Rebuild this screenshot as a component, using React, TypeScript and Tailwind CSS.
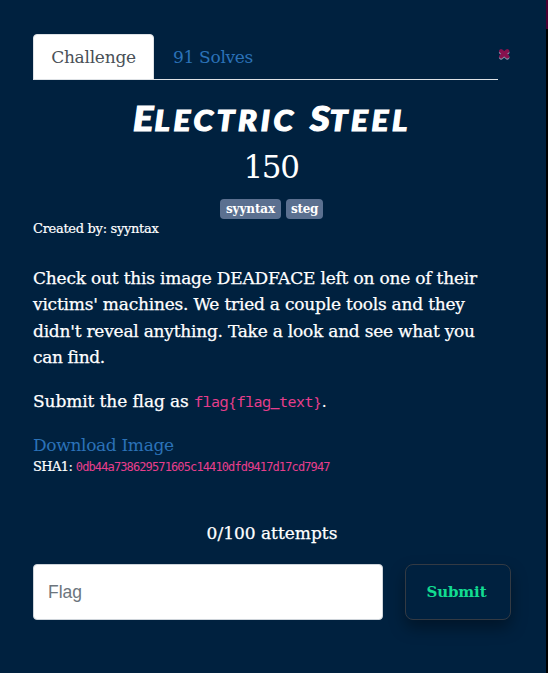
import type { ReactNode } from 'react';

const slab = "font-['DejaVu_Serif',serif]";

function Line({ children, spacing }: { children: ReactNode; spacing: string }) {
  return <span className={`block whitespace-nowrap ${spacing}`}>{children}</span>;
}

function Badge({ children, size }: { children: string; size: string }) {
  return (
    <span className={`flex h-5 items-center justify-center rounded bg-[#5b7090] pb-px text-[12px] font-bold ${size}`}>
      {children}
    </span>
  );
}

function CloseIcon() {
  return (
    <svg width="14" height="14" viewBox="0 0 14 14" className="block" fill="none" strokeLinecap="round">
      <path d="M3 5.4 9.4 10.6M9.4 5.4 3 10.6" stroke="#8090a8" strokeWidth="4" />
      <path d="M3.1 4.1 9.3 9.5M9.3 4.1 3.1 9.5" stroke="#86114e" strokeWidth="4" />
    </svg>
  );
}

export default function App() {
  return (
    <div className={`flex h-[673px] w-[548px] overflow-hidden bg-black text-white ${slab}`}>
      <main className="flex w-[546px] flex-col bg-[#00213f] pt-[34px] pl-[33px]">
        <div className="flex h-[46px]">
          <nav className="flex w-[465px] border-b border-[#dee2e6] text-[17px]">
            <button className="-mb-px h-[46px] w-[121px] rounded-t border border-[#dee2e6] bg-white pt-px tracking-[-0.25px] text-[#495057]">
              Challenge
            </button>
            <button className="h-[45px] w-[118px] pt-[2px] tracking-[-0.3px] text-[#2b72b8]">91 Solves</button>
          </nav>
          <button className="mt-[13px] h-[14px]" aria-label="Close">
            <CloseIcon />
          </button>
        </div>

        <h2 className="mt-[18px] flex h-10 w-[478px] origin-center scale-x-[1.12] items-baseline justify-center font-['Lato',sans-serif] text-[34px] leading-10 font-black whitespace-nowrap uppercase italic [-webkit-text-stroke:1.2px_white]">
          <span>E</span>
          <span className="ml-px text-[28px] tracking-[3.3px]">lectric</span>
          <span className="ml-[12px]">S</span>
          <span className="text-[28px] tracking-[3.3px]">teel</span>
        </h2>
        <h3 className="mt-[9px] h-10 w-[476px] text-center text-[31px] leading-10 tracking-[-1.4px]">150</h3>
        <div className="mt-3 flex h-5 w-[477px] justify-center gap-[5px]">
          <Badge size="w-[61px] tracking-[-0.1px]">syyntax</Badge>
          <Badge size="w-[37px] tracking-[-0.3px]">steg</Badge>
        </div>
        <small className="h-[21px] text-[13px] leading-[20px] tracking-[-0.3px] [-webkit-text-stroke:0.2px_white]">
          Created by: syyntax
        </small>

        <div className="mt-[25px] text-[17px] leading-[26.25px]">
          <p className="[-webkit-text-stroke:0.25px_white]">
            <Line spacing="tracking-[-0.2px]">Check out this image DEADFACE left on one of their</Line>
            <Line spacing="tracking-[-0.21px]">victims' machines. We tried a couple tools and they</Line>
            <Line spacing="tracking-[-0.23px]">didn't reveal anything. Take a look and see what you</Line>
            <Line spacing="tracking-[-0.35px]">can find.</Line>
          </p>
          <p className="mt-[18px] tracking-[-0.1px] whitespace-nowrap">
            <span className="[-webkit-text-stroke:0.25px_white]">Submit the flag as </span>
            <code className="font-['Noto_Sans_Mono','DejaVu_Sans_Mono',monospace] text-[15px] tracking-[-0.5px] text-[#e83e8c]">
              flag&#123;flag_text&#125;
            </code>
            .
          </p>
          <p className="mt-[18px] tracking-[-0.33px] text-[#2b72b8]">Download Image</p>
        </div>
        <p className="-mt-[3px] h-[21px] text-[13px] leading-[21px] tracking-[-0.6px] whitespace-nowrap">
          <span className="[-webkit-text-stroke:0.2px_white]">SHA1: </span>
          <code className="font-['DejaVu_Sans_Mono',monospace] text-[12px] tracking-[-0.88px] text-[#e83e8c]">
            0db44a738629571605c14410dfd9417d17cd7947
          </code>
        </p>

        <p className="mt-[43px] h-[26px] w-[478px] text-center text-[17px] leading-[26px] [-webkit-text-stroke:0.25px_white]">
          0/100 attempts
        </p>
        <div className="mt-[18px] flex h-14 gap-[22px]">
          <input
            placeholder="Flag"
            className="h-14 w-[350px] rounded border border-[#ced4da] bg-white px-[14px] pt-px font-['Liberation_Sans',sans-serif] text-[17.5px] placeholder:text-[#6c757d]"
          />
          <button className="h-14 w-[106px] rounded-lg border border-[#333a43] pt-[2px] pr-[3px] text-[15px] font-bold tracking-[-0.1px] text-[#12dc91] shadow-[0_8px_16px_rgba(0,0,0,0.35)]">
            Submit
          </button>
        </div>
      </main>
      <aside className="w-[2px] bg-black">
        <div className="h-[29px] bg-[#4c0030]" />
      </aside>
    </div>
  );
}
